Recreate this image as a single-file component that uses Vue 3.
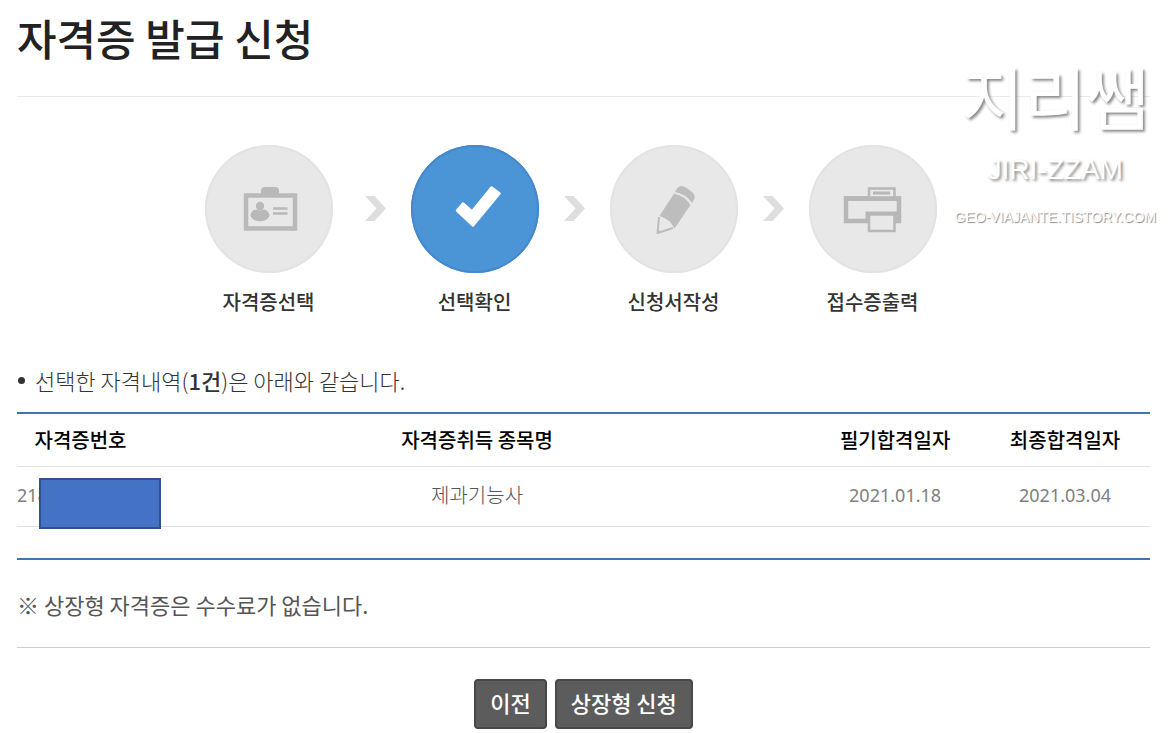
<script setup>
const steps = [
  { id: 'card', label: '자격증선택' },
  { id: 'check', label: '선택확인' },
  { id: 'pencil', label: '신청서작성' },
  { id: 'printer', label: '접수증출력' },
]
const columns = ['자격증번호', '자격증취득 종목명', '필기합격일자', '최종합격일자']
</script>

<template>
  <main class="page">
    <header class="heading">
      <h1>자격증 발급 신청</h1>
      <div class="watermark">
        <span class="mark-name">지리쌤</span>
        <span class="mark-latin">JIRI-ZZAM</span>
        <span class="mark-url">GEO-VIAJANTE.TISTORY.COM</span>
      </div>
    </header>

    <ol class="steps">
      <template v-for="(step, i) in steps" :key="step.id">
        <li v-if="i > 0" class="arrow" :class="{ first: i === 1 }" aria-hidden="true">
          <svg width="22" height="26" viewBox="0 0 22 26"><path d="M0 0h9.500L21 12.500 9.500 25H0L11.500 12.500Z" fill="#dedede" /></svg>
        </li>
        <li class="step">
          <div class="disc" :class="{ active: step.id === 'check' }">
            <svg v-if="step.id === 'card'" width="128" height="128" viewBox="0 0 128 128">
              <rect x="41" y="50.500" width="49" height="33" fill="none" stroke="#b9b9b9" stroke-width="4.500" />
              <path d="M56 50v-4q0-4 4-4h10q4 0 4 4v4Z" fill="#b9b9b9" />
              <circle cx="55" cy="61" r="4.200" fill="#b9b9b9" />
              <path d="M45.500 71c0-4 3-6.500 6.500-6.500 2 1.300 4 1.300 6 0 3.500 0 6.500 2.500 6.500 6.500-3 7-16 7-19 0Z" fill="#b9b9b9" />
              <path d="M68 63.500h14.500M68 68.500h14.500" stroke="#b9b9b9" stroke-width="2.500" />
            </svg>
            <svg v-else-if="step.id === 'check'" width="128" height="128" viewBox="0 0 128 128">
              <path d="M46 65.500 52 58.500 61 66.500 80.500 42.500 88.500 48.500 62 80.500Z" fill="#fff" stroke="#fff" stroke-width="2.500" stroke-linejoin="round" />
            </svg>
            <svg v-else-if="step.id === 'pencil'" width="128" height="128" viewBox="0 0 128 128">
              <path d="M67 43.500Q70 39 76 42.500L82 47Q86.500 51 83.500 55.500L82 58Q76 49 65 47Z" fill="#bdbdbd" />
              <path d="M64 48.500Q75 51 80.500 60L64.500 83.500Q60 74 49.500 71Z" fill="#bdbdbd" />
              <path d="M49 72 47.500 88 63 83" fill="none" stroke="#bdbdbd" stroke-width="2" stroke-linejoin="round" />
              <path d="M47 89v-6l4.500 4.500Z" fill="#bdbdbd" />
            </svg>
            <svg v-else width="128" height="128" viewBox="0 0 128 128">
              <rect x="37" y="53.500" width="53" height="22.500" fill="none" stroke="#b7b7b7" stroke-width="4.500" />
              <rect x="60" y="43.500" width="25.500" height="10" fill="#e8e8e8" stroke="#b7b7b7" stroke-width="2.500" />
              <path d="M64 48h17" stroke="#b7b7b7" stroke-width="3" />
              <path d="M56.500 66.500h34V78H56.500Z" fill="#b7b7b7" />
              <rect x="60" y="69.500" width="25.500" height="16.500" fill="#e8e8e8" stroke="#b7b7b7" stroke-width="2.500" />
              <path d="M35 53.500h57" stroke="#b7b7b7" stroke-width="4.500" />
            </svg>
          </div>
          <span class="step-label">{{ step.label }}</span>
        </li>
      </template>
    </ol>

    <p class="summary"><i class="dot"></i><span>선택한 자격내역(<b>1건</b>)은 아래와 같습니다.</span></p>

    <div class="list">
      <table>
        <colgroup><col class="c-no" /><col /><col class="c-date" /><col class="c-date" /></colgroup>
        <thead>
          <tr><th v-for="c in columns" :key="c" scope="col">{{ c }}</th></tr>
        </thead>
        <tbody>
          <tr>
            <td class="number">218<span class="redaction"></span></td>
            <td class="item">제과기능사</td>
            <td>2021.01.18</td>
            <td>2021.03.04</td>
          </tr>
        </tbody>
      </table>
    </div>

    <p class="note">※ 상장형 자격증은 수수료가 없습니다.</p>

    <div class="actions">
      <button type="button">이전</button>
      <button type="button">상장형 신청</button>
    </div>
  </main>
</template>

<style>
body {
  background: #fff;
}
</style>

<style scoped>
.page {
  padding: 0 21px 0 17px;
  font-family: "Noto Sans CJK KR", sans-serif;
  font-size: 20px;
  line-height: 28px;
  color: #333;
}
.heading {
  position: relative;
  height: 96px;
  border-bottom: 1px solid #e9e9e9;
}
h1 {
  margin: 0;
  padding-top: 6px;
  font-size: 43px;
  line-height: 62px;
  font-weight: 500;
  color: #222;
}
.watermark {
  position: absolute;
  top: 52px;
  right: -6px;
  display: flex;
  flex-direction: column;
  align-items: center;
  color: #fff;
  text-shadow: 2px 2px 3px #888;
  white-space: nowrap;
}
.mark-name {
  font-size: 68px;
  line-height: 88px;
  font-weight: 400;
}
.mark-latin,
.mark-url {
  font-family: "Liberation Sans Narrow", "Liberation Sans", sans-serif;
}
.mark-latin {
  font-size: 28px;
  line-height: 60px;
}
.mark-url {
  font-size: 14px;
  line-height: 34px;
  text-shadow: 1px 1px 1px #888;
}
.steps {
  display: flex;
  justify-content: center;
  margin: 0;
  padding: 48px 26px 0 0;
  list-style: none;
}
.step {
  width: 128px;
  text-align: center;
}
.disc {
  box-sizing: border-box;
  width: 128px;
  height: 128px;
  border-radius: 50%;
  background: #e8e8e8;
  box-shadow: inset 0 0 0 2px #e3e3e3;
}
.disc.active {
  background: #4b95d6;
  box-shadow: inset 0 0 0 2px #4389cb;
}
.disc svg,
.arrow svg {
  display: block;
}
.step-label {
  display: block;
  margin-top: 15px;
  font-weight: 500;
}
.arrow {
  padding: 51px 24px 0 25px;
}
.arrow.first {
  padding-left: 32px;
}
.summary {
  display: flex;
  align-items: center;
  margin: 50px 0 18px;
  font-size: 22px;
  font-weight: 300;
}
.summary b {
  font-weight: 500;
}
.dot {
  width: 7px;
  height: 7px;
  margin: 0 10px 0 1px;
  border-radius: 50%;
  background: #333;
}
.list {
  padding-bottom: 31px;
  border-top: 2px solid #3f76b2;
  border-bottom: 2px solid #3f76b2;
}
table {
  width: 100%;
  table-layout: fixed;
  border-collapse: collapse;
}
.c-no {
  width: 127px;
}
.c-date {
  width: 15%;
}
th,
td {
  padding: 0;
  text-align: center;
  border-bottom: 1px solid #e3e3e3;
}
th {
  height: 52px;
  font-weight: 500;
  color: #000;
}
td {
  height: 55px;
  padding-bottom: 4px;
  font-family: "Noto Sans", "Noto Sans CJK KR", sans-serif;
  font-size: 18px;
  font-weight: 400;
  color: #808080;
}
.item {
  font-family: "Noto Sans CJK KR", sans-serif;
  font-size: 20px;
  font-weight: 300;
  color: #555;
}
.number {
  position: relative;
  text-align: left;
}
.redaction {
  position: absolute;
  left: 22px;
  top: 11px;
  box-sizing: border-box;
  width: 122px;
  height: 51px;
  border: 2px solid #2f528f;
  background: #4472c4;
}
.note {
  margin: 0;
  padding: 30px 0 29px;
  font-size: 22px;
  font-weight: 400;
  color: #555;
  border-bottom: 1px solid #cfcfcf;
}
.actions {
  display: flex;
  justify-content: center;
  gap: 8px;
  padding-top: 31px;
}
button {
  height: 50px;
  padding: 0 14px 4px;
  border: 2px solid #484848;
  border-radius: 4px;
  background: #5c5c5c;
  font-family: inherit;
  font-size: 22px;
  font-weight: 500;
  color: #fff;
}
</style>
